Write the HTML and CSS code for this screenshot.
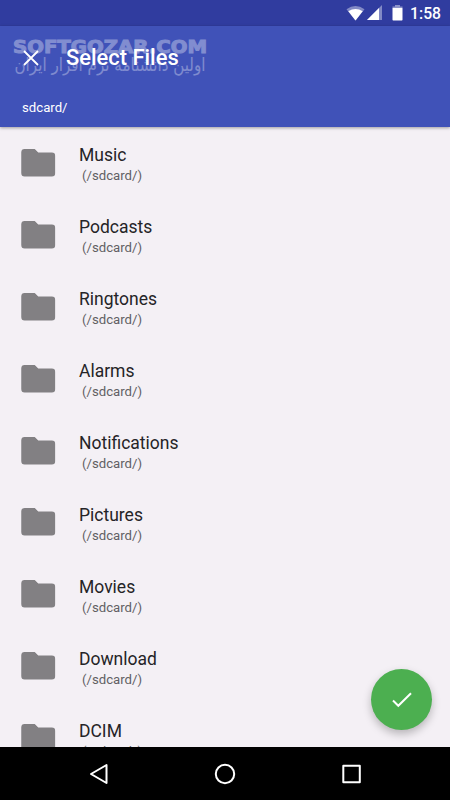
FILE: index.html
```html
<!DOCTYPE html>
<html lang="en">
<head>
<meta charset="utf-8">
<title>Select Files</title>
<link rel="stylesheet" href="styles.css">
</head>
<body>
<div class="screen">
  <header class="status">
    <svg class="status-icons" width="60" height="20" viewBox="0 0 60 20" fill="#fff">
      <path opacity=".4" d="M0.5 5.2Q9.5-1.2 18.5 5.2L9.5 16.5Z"/>
      <path d="M2.3 7.3Q9.5 2.7 16.7 7.3L9.5 16.5Z"/>
      <path opacity=".4" d="M36 1V16H21Z"/>
      <path d="M33 4V16H21Z"/>
      <path opacity=".45" d="M46.500 2.500H49V1h5v1.500H56.500V5H46.500Z"/>
      <rect x="46.500" y="4" width="10" height="12.500" rx=".7"/>
    </svg>
    <span class="clock">1:58</span>
  </header>
  <div class="appbar">
    <div class="toolbar">
      <svg class="close" width="18" height="18" viewBox="0 0 18 18"><path d="M2 2 16 16M16 2 2 16"/></svg>
      <h1 class="title">Select Files</h1>
    </div>
    <div class="path">sdcard/</div>
    <svg class="watermark" width="220" height="50" viewBox="0 0 220 50">
      <text class="mark-latin" x="13" y="16.500" textLength="194" lengthAdjust="spacingAndGlyphs">SOFTGOZAR.COM</text>
      <text class="mark-persian" x="110" y="35" text-anchor="middle" direction="rtl" textLength="191" lengthAdjust="spacingAndGlyphs">اولین دانشنامه نرم افزار ایران</text>
    </svg>
  </div>
  <svg class="defs" width="0" height="0"><symbol id="folder" viewBox="0 0 34 28"><path d="M3.400 0H13.500L17 3.500H30.600Q34 3.500 34 6.900V24Q34 27.500 30.600 27.500H3.400Q0 27.500 0 24V3.400Q0 0 3.400 0Z"/></symbol></svg>
  <ul class="list">
    <li class="row"><svg class="folder"><use href="#folder"/></svg><div><div class="name">Music</div><div class="sub">(/sdcard/)</div></div></li>
    <li class="row"><svg class="folder"><use href="#folder"/></svg><div><div class="name">Podcasts</div><div class="sub">(/sdcard/)</div></div></li>
    <li class="row"><svg class="folder"><use href="#folder"/></svg><div><div class="name">Ringtones</div><div class="sub">(/sdcard/)</div></div></li>
    <li class="row"><svg class="folder"><use href="#folder"/></svg><div><div class="name">Alarms</div><div class="sub">(/sdcard/)</div></div></li>
    <li class="row"><svg class="folder"><use href="#folder"/></svg><div><div class="name">Notifications</div><div class="sub">(/sdcard/)</div></div></li>
    <li class="row"><svg class="folder"><use href="#folder"/></svg><div><div class="name">Pictures</div><div class="sub">(/sdcard/)</div></div></li>
    <li class="row"><svg class="folder"><use href="#folder"/></svg><div><div class="name">Movies</div><div class="sub">(/sdcard/)</div></div></li>
    <li class="row"><svg class="folder"><use href="#folder"/></svg><div><div class="name">Download</div><div class="sub">(/sdcard/)</div></div></li>
    <li class="row"><svg class="folder"><use href="#folder"/></svg><div><div class="name">DCIM</div><div class="sub">(/sdcard/)</div></div></li>
  </ul>
  <button class="fab" aria-label="Confirm"><svg width="22" height="18" viewBox="0 0 22 18"><path d="M2 9.500 7.300 14.800 20 2.200"/></svg></button>
  <nav class="navbar">
    <svg width="22" height="24" viewBox="0 0 22 24"><path d="M18.500 3V21L3 12Z"/></svg>
    <svg width="22" height="24" viewBox="0 0 22 24"><circle cx="11" cy="12" r="9.200"/></svg>
    <svg width="22" height="24" viewBox="0 0 22 24"><rect x="2.300" y="3.800" width="16.500" height="16.500"/></svg>
  </nav>
</div>
</body>
</html>
```
FILE: styles.css
```css
* { box-sizing: border-box; }
body { margin: 0; font-family: Roboto, "Liberation Sans", sans-serif; }
.screen {
  position: relative;
  display: flex;
  flex-direction: column;
  width: 450px;
  height: 800px;
  overflow: hidden;
  background: #f4f0f5;
}
.status {
  display: flex;
  flex: none;
  justify-content: flex-end;
  gap: 4px;
  height: 26px;
  padding: 4px 9px 0 0;
  background: #303c9f;
}
.clock { color: #fff; font-size: 15.7px; font-weight: 500; line-height: 20px; }
.appbar {
  position: relative;
  z-index: 1;
  flex: none;
  height: 101px;
  background: #4052b8;
  box-shadow: 0 1px 3px rgba(0, 0, 0, .35);
}
.toolbar { display: flex; align-items: center; height: 64px; padding-left: 22px; }
.close { fill: none; stroke: #fff; stroke-width: 1.8; }
.title { margin: 0 0 0 26px; color: #fff; font-size: 21.9px; font-weight: 500; line-height: 26px; }
.path { padding: 9px 0 0 22px; color: #fff; font-size: 13.2px; line-height: 18px; }
.watermark { position: absolute; top: 10px; left: 0; fill: #fff; overflow: visible; }
.mark-latin { font: bold 18px "DejaVu Sans", sans-serif; stroke: #fff; stroke-width: 1; opacity: .34; }
.mark-persian { font: 18px "DejaVu Sans", sans-serif; opacity: .33; }
.defs { position: absolute; }
.list { flex: 1; min-height: 0; margin: 0; padding: 0; overflow: hidden; list-style: none; }
.row { display: flex; gap: 23.500px; height: 71.9px; padding: 17.400px 0 0 21px; }
.folder { width: 34.5px; height: 28px; margin-top: 4.600px; fill: #828083; }
.name { color: #252427; font-size: 17.5px; line-height: 22px; }
.sub { padding: 1px 0 0 3px; color: #626064; font-size: 13.2px; line-height: 18px; }
.fab {
  position: absolute;
  top: 669px;
  left: 371px;
  display: grid;
  place-items: center;
  width: 61px;
  height: 61px;
  padding: 0;
  border: 0;
  border-radius: 50%;
  background: #4caf50;
  box-shadow: 0 4px 9px rgba(0, 0, 0, .25);
}
.fab svg { fill: none; stroke: #fff; stroke-width: 2; }
.navbar {
  z-index: 1;
  display: flex;
  flex: none;
  align-items: center;
  justify-content: center;
  gap: 104.500px;
  height: 53px;
  background: #000;
}
.navbar svg { fill: none; stroke: #fff; stroke-width: 2; stroke-linejoin: round; }
```
